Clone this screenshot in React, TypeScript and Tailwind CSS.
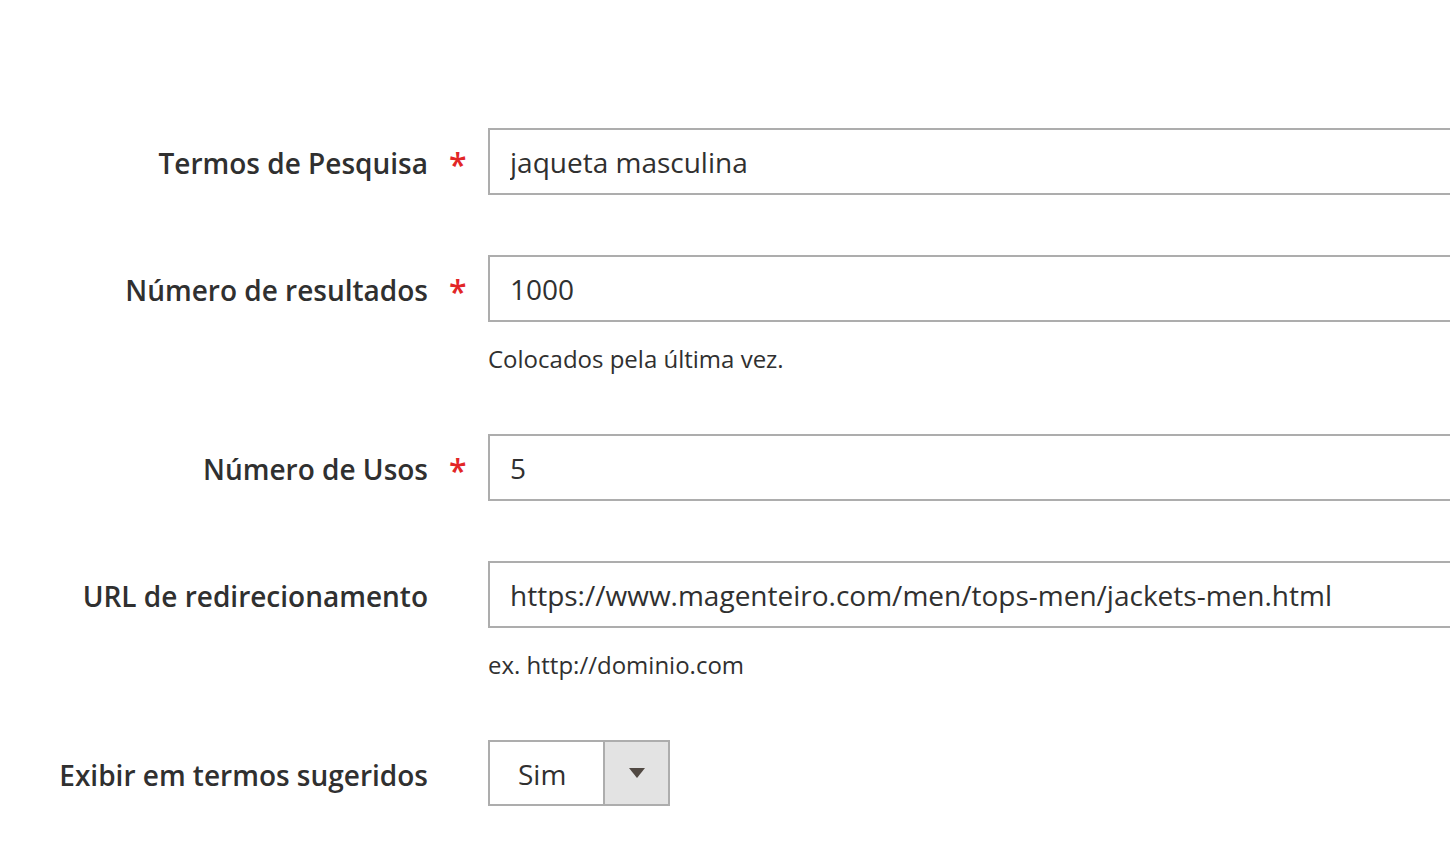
const fields = [
  { label: "Termos de Pesquisa", value: "jaqueta masculina", required: true },
  { label: "Número de resultados", value: "1000", required: true, note: "Colocados pela última vez." },
  { label: "Número de Usos", value: "5", required: true },
  {
    label: "URL de redirecionamento",
    value: "https://www.magenteiro.com/men/tops-men/jackets-men.html",
    required: false,
    note: "ex. http://dominio.com",
  },
];

const Label = ({ text, required }: { text: string; required?: boolean }) => (
  <div className="flex items-center h-[67px] pt-[3px] shrink-0">
    <label className="w-[428px] text-right text-[28px] font-semibold text-[#303030]">{text}</label>
    <div className="w-[60px] flex items-center">
      {required && <span className="ml-[21px] mt-[3px] text-[32px] leading-none font-semibold text-[#e22626]">*</span>}
    </div>
  </div>
);

const App = () => {
  return (
    <div
      className="w-screen h-[850px] overflow-hidden bg-white pt-[128px]"
      style={{ fontFamily: "'Open Sans', 'Liberation Sans', sans-serif" }}
    >
      {fields.map((f) => (
        <div key={f.label} className="flex items-start mb-[60px]">
          <Label text={f.label} required={f.required} />
          <div className="flex flex-col">
            <input
              readOnly
              value={f.value}
              className="w-[1100px] h-[67px] border-2 border-[#adadad] px-[20px] text-[28px] text-[#303030] outline-none bg-white"
            />
            {f.note && <div className="mt-[21px] leading-[31px] text-[24px] text-[#303030]">{f.note}</div>}
          </div>
        </div>
      ))}
      <div className="flex items-start">
        <Label text="Exibir em termos sugeridos" />
        <div className="flex w-[182px] h-[66px] border-2 border-[#adadad] bg-white">
          <div className="w-[113px] flex items-center pl-[28px] pt-[1px] text-[28px] text-[#303030]">Sim</div>
          <div className="flex-1 border-l-2 border-[#adadad] bg-[#e3e3e3] flex items-center justify-center">
            <svg width="16" height="10" viewBox="0 0 16 10">
              <path d="M0 0 L16 0 L8 10 Z" fill="#514943" />
            </svg>
          </div>
        </div>
      </div>
    </div>
  );
};

export default App;
